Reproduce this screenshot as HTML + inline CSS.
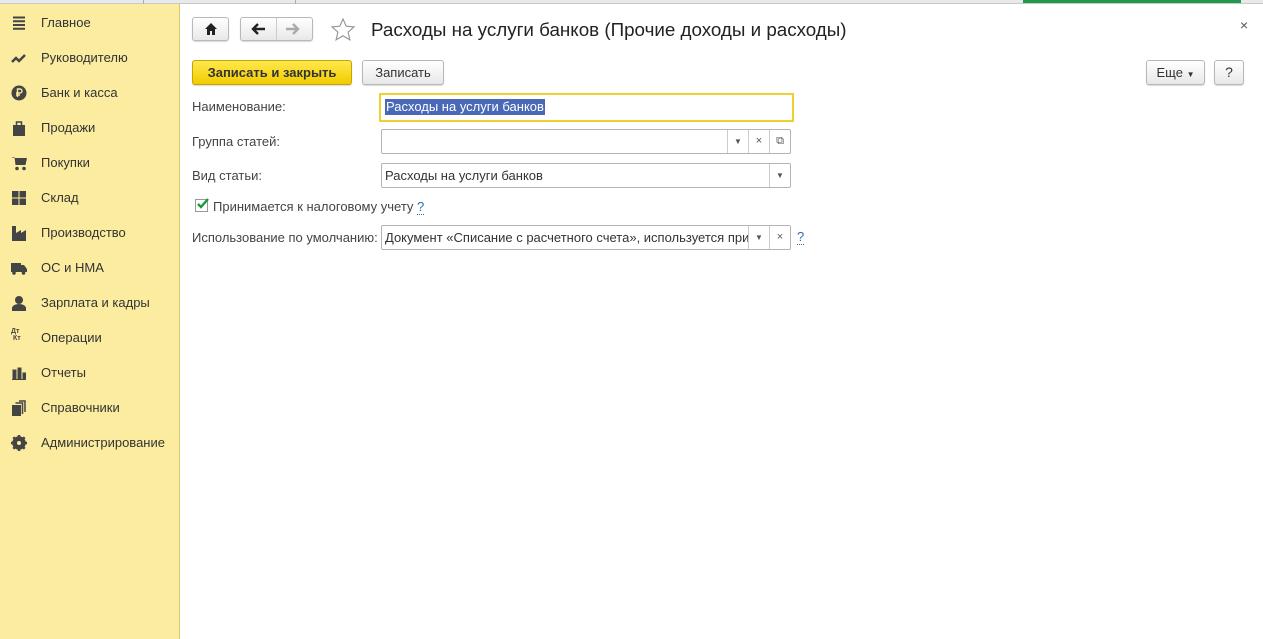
<!DOCTYPE html>
<html><head><meta charset="utf-8"><style>
*{box-sizing:border-box;margin:0;padding:0}
body{width:1263px;height:639px;overflow:hidden;background:#fff;font-family:"Liberation Sans",Arial,sans-serif;font-size:13px;color:#333;position:relative}
.abs{position:absolute}
#side{left:0;top:4px;width:180px;height:635px;background:#fbeca0;border-right:1px solid #d9c86e}
.it{position:absolute;left:41px;font-size:13px;color:#333;line-height:16px}
.ic{position:absolute;left:11px;width:16px;height:16px}
.btn{position:absolute;border:1px solid #b8b8b8;border-radius:3px;background:linear-gradient(#fff,#e8e8e8);box-shadow:0 1px 1px rgba(0,0,0,.15);text-align:center}
.inp{position:absolute;border:1px solid #b4b4b4;border-radius:2px;background:#fff;height:25px;font-size:13px;line-height:24px;padding-left:3px;color:#333;overflow:hidden;white-space:nowrap}
.dd{position:absolute;top:0;width:21px;height:23px;border-left:1px solid #ccc;font-size:8px;text-align:center;line-height:23px;color:#555}
.lbl{position:absolute;left:192px;color:#444}
</style></head><body>
<div class="abs" style="left:0;top:0;width:1263px;height:4px;background:#e9e9e9;border-bottom:1px solid #c9c9c9"></div>
<div class="abs" style="left:143px;top:0;width:1px;height:4px;background:#aaa"></div>
<div class="abs" style="left:295px;top:0;width:1px;height:4px;background:#aaa"></div>
<div class="abs" style="left:1023px;top:0;width:218px;height:3px;background:#1d9a4a"></div>
<div id="side" class="abs">
<svg class="ic" style="top:11px" viewBox="0 0 16 16"><path d="M2 2.5h12M2 6.3h12M2 10h12M2 13.8h12" stroke="#444" stroke-width="2"/></svg>
<div class="it" style="top:11px">Главное</div>
<svg class="ic" style="top:46px" viewBox="0 0 16 16"><path d="M1 12l4-4 3 3 6-6" stroke="#444" stroke-width="2.5" fill="none"/></svg>
<div class="it" style="top:46px">Руководителю</div>
<svg class="ic" style="top:81px" viewBox="0 0 16 16"><circle cx="8" cy="8" r="7.5" fill="#444"/><path d="M6.5 12V4h2.5a2 2 0 010 4H5M5 10h4" stroke="#fbeca0" stroke-width="1.4" fill="none"/></svg>
<div class="it" style="top:81px">Банк и касса</div>
<svg class="ic" style="top:116px" viewBox="0 0 16 16"><path d="M2 5h12v11H2z" fill="#444"/><path d="M5.5 6V2h5v4" stroke="#444" stroke-width="1.5" fill="none"/></svg>
<div class="it" style="top:116px">Продажи</div>
<svg class="ic" style="top:151px" viewBox="0 0 16 16"><path d="M0 2h3.5l1 8h10l1.5-7H4" fill="#444"/><circle cx="6" cy="13.5" r="1.8" fill="#444"/><circle cx="13" cy="13.5" r="1.8" fill="#444"/></svg>
<div class="it" style="top:151px">Покупки</div>
<svg class="ic" style="top:186px" viewBox="0 0 16 16"><path d="M1 1h6.5v6.5H1zM8.5 1H15v6.5H8.5zM1 8.5h6.5V15H1zM8.5 8.5H15V15H8.5z" fill="#444"/></svg>
<div class="it" style="top:186px">Склад</div>
<svg class="ic" style="top:221px" viewBox="0 0 16 16"><path d="M1 16V1h4v7l5-3v3l5-3v11z" fill="#444"/></svg>
<div class="it" style="top:221px">Производство</div>
<svg class="ic" style="top:256px" viewBox="0 0 16 16"><path d="M0 3h10v9H0zM10 5h3l3 4v3h-6z" fill="#444"/><circle cx="3" cy="13" r="1.8" fill="#444"/><circle cx="12.5" cy="13" r="1.8" fill="#444"/></svg>
<div class="it" style="top:256px">ОС и НМА</div>
<svg class="ic" style="top:291px" viewBox="0 0 16 16"><circle cx="8" cy="5" r="4" fill="#444"/><path d="M1 16v-3c0-2 3-4 7-4s7 2 7 4v3z" fill="#444"/></svg>
<div class="it" style="top:291px">Зарплата и кадры</div>
<div class="ic" style="top:324px;font-size:7px;line-height:7px;font-weight:bold;color:#444">Дт<br>&nbsp;Кт</div>
<div class="it" style="top:326px">Операции</div>
<svg class="ic" style="top:361px" viewBox="0 0 16 16"><path d="M1 14.5h14M2 5h3v9H2zM7 3h3v11H7zM12 8h2.5v6H12z" stroke="#444" fill="#444"/></svg>
<div class="it" style="top:361px">Отчеты</div>
<svg class="ic" style="top:396px" viewBox="0 0 16 16"><path d="M1 5h9v11H1z" fill="#444"/><path d="M4.5 3h7v11M8 1h6v11" stroke="#444" stroke-width="1.5" fill="none"/></svg>
<div class="it" style="top:396px">Справочники</div>
<svg class="ic" style="top:431px" viewBox="0 0 16 16"><circle cx="8" cy="8" r="5" fill="none" stroke="#444" stroke-width="3.5"/><path d="M8 0v16M0 8h16M2.3 2.3l11.4 11.4M13.7 2.3L2.3 13.7" stroke="#444" stroke-width="2.5"/><circle cx="8" cy="8" r="2" fill="#fbeca0"/></svg>
<div class="it" style="top:431px">Администрирование</div>
</div>

<div class="btn" style="left:192px;top:17px;width:37px;height:24px"><svg width="14" height="14" viewBox="0 0 14 14" style="margin-top:4px"><path d="M7 1L1 7h2v6h3V9h2v4h3V7h2z" fill="#222"/></svg></div>
<div class="btn" style="left:240px;top:17px;width:73px;height:24px"></div>
<div class="abs" style="left:276px;top:18px;width:1px;height:22px;background:#ccc"></div>
<svg class="abs" style="left:250px;top:22px" width="16" height="14" viewBox="0 0 16 14"><path d="M15 7H3M8 2L3 7l5 5" stroke="#222" stroke-width="2.4" fill="none"/></svg>
<svg class="abs" style="left:285px;top:22px" width="16" height="14" viewBox="0 0 16 14"><path d="M1 7h12M8 2l5 5-5 5" stroke="#aaa" stroke-width="2.4" fill="none"/></svg>
<svg class="abs" style="left:331px;top:18px" width="24" height="23" viewBox="0 0 24 23"><path d="M12 1l3.2 7.2 7.8.7-5.9 5.2 1.8 7.7L12 17.8 5.1 21.8l1.8-7.7L1 8.9l7.8-.7z" fill="none" stroke="#999" stroke-width="1.2"/></svg>
<div class="abs" style="left:371px;top:19px;font-size:18.8px;color:#222">Расходы на услуги банков (Прочие доходы и расходы)</div>
<div class="abs" style="left:1240px;top:17px;font-size:14px;color:#555">×</div>

<div class="btn" style="left:192px;top:60px;width:160px;height:25px;background:linear-gradient(#ffe84d,#f2cc00);border-color:#c7a500;font-weight:bold;line-height:23px;color:#333">Записать и закрыть</div>
<div class="btn" style="left:362px;top:60px;width:82px;height:25px;line-height:23px">Записать</div>
<div class="btn" style="left:1146px;top:60px;width:59px;height:25px;line-height:23px">Еще <span style="font-size:8px">▼</span></div>
<div class="btn" style="left:1214px;top:60px;width:30px;height:25px;line-height:23px;font-size:14px">?</div>

<div class="lbl" style="top:99px">Наименование:</div>
<div class="abs" style="left:379px;top:93px;width:415px;height:29px;border:2px solid #f0cf32;background:#fff"></div>
<div class="abs" style="left:385px;top:99px;height:16px;background:#4a68b8;color:#fff;font-size:13px;line-height:16px;padding:0 1px">Расходы на услуги банков</div>

<div class="lbl" style="top:134px">Группа статей:</div>
<div class="inp" style="left:381px;top:129px;width:410px">
<div class="dd" style="left:345px">▼</div><div class="dd" style="left:366px;font-size:11px">×</div><div class="dd" style="left:387px;font-size:11px">⧉</div></div>

<div class="lbl" style="top:168px">Вид статьи:</div>
<div class="inp" style="left:381px;top:163px;width:410px">Расходы на услуги банков<div class="dd" style="left:387px">▼</div></div>

<div class="abs" style="left:195px;top:199px;width:13px;height:13px;border:1px solid #999;background:#fff"></div>
<svg class="abs" style="left:195px;top:196px" width="15" height="15" viewBox="0 0 15 15"><path d="M3 8l3 3 7-8" stroke="#1a9a3a" stroke-width="2.4" fill="none"/></svg>
<div class="abs" style="left:213px;top:199px;color:#444">Принимается к налоговому учету <span style="color:#2a6db0;border-bottom:1px dotted #2a6db0">?</span></div>

<div class="lbl" style="top:230px">Использование по умолчанию:</div>
<div class="inp" style="left:381px;top:225px;width:410px">Документ «Списание с расчетного счета», используется при<div class="dd" style="left:366px;background:#fff">▼</div><div class="dd" style="left:387px;font-size:11px;background:#fff">×</div></div>
<div class="abs" style="left:797px;top:229px;color:#2a6db0;border-bottom:1px dotted #2a6db0;line-height:15px">?</div>
</body></html>
